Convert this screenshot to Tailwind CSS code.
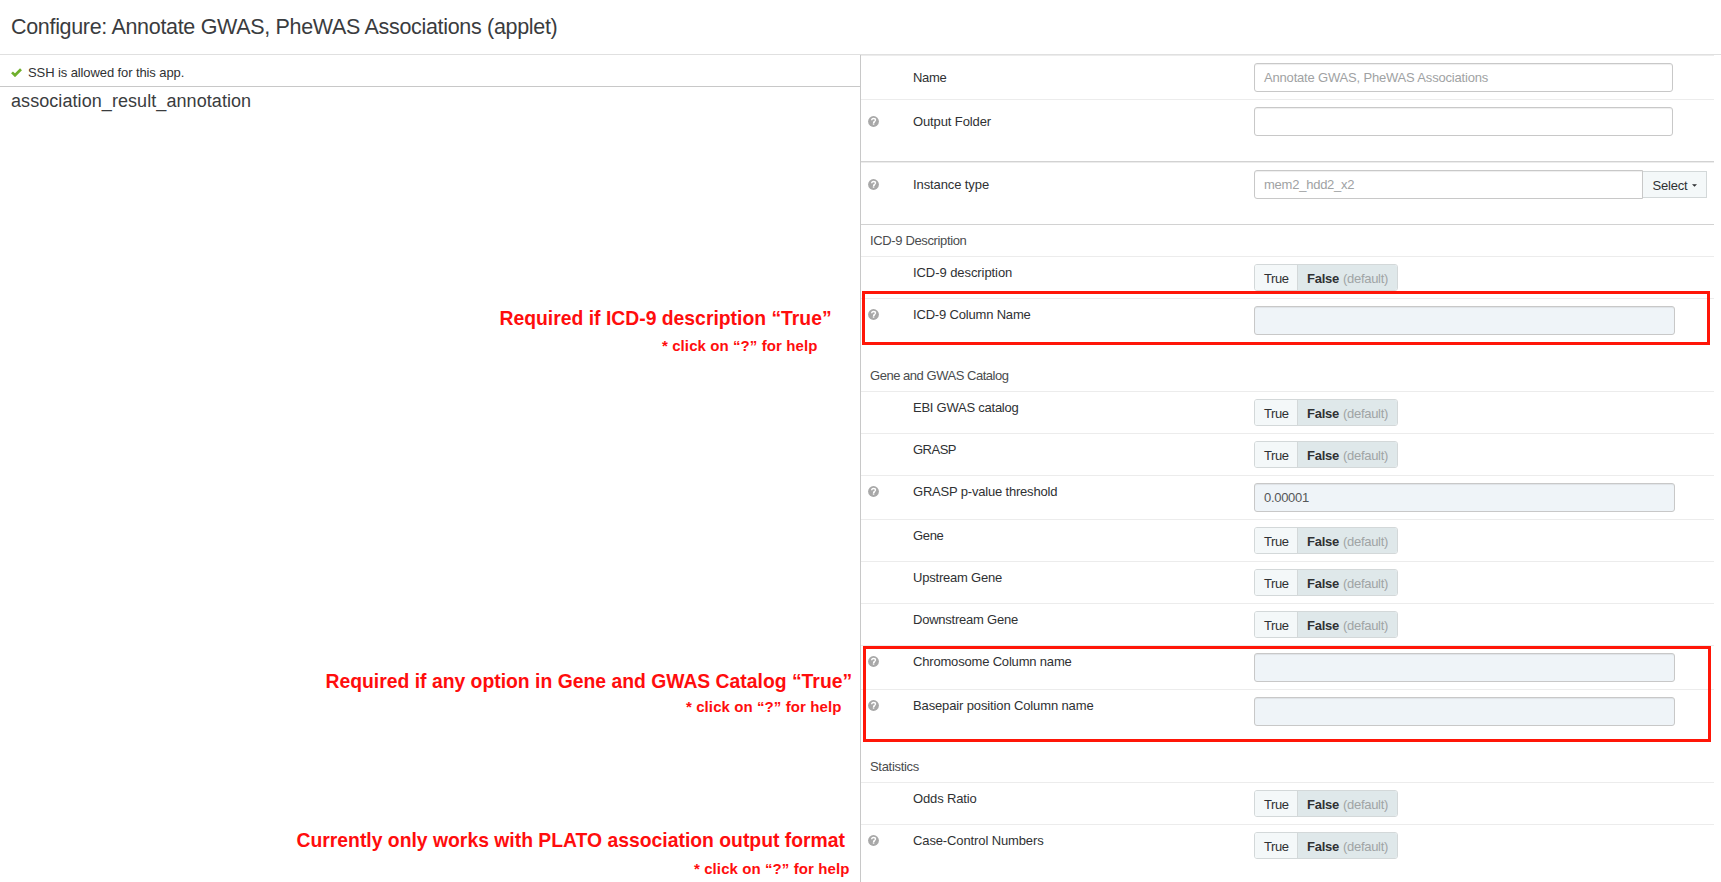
<!DOCTYPE html>
<html lang="en">
<head>
<meta charset="utf-8">
<title>Configure: Annotate GWAS, PheWAS Associations (applet)</title>
<script src="https://cdn.jsdelivr.net/npm/@tailwindcss/browser@4"></script>
</head>
<body class="relative h-[882px] w-[1721px] overflow-hidden bg-white font-['Liberation_Sans',Arial,sans-serif] text-[13px] leading-5 text-[#2f3133]">
<svg class="hidden">
  <symbol id="help" viewBox="0 0 11 11">
    <circle cx="5.5" cy="5.5" r="5.4" fill="#a8a8a8"/>
    <path d="M3.7 4.3C3.7 3.1 4.5 2.5 5.6 2.5S7.5 3.1 7.5 4.1C7.5 5.2 6.1 5.2 6.1 6.3H5" fill="none" stroke="#fff" stroke-width="1.4"/>
    <rect x="4.8" y="7.3" width="1.5" height="1.4" fill="#fff"/>
  </symbol>
</svg>

<header class="flex h-[55px] items-center border-b border-[#e0e0e0] pl-[11px]">
  <h1 class="text-[21.5px] leading-[52px] tracking-[-0.32px] text-[#3a3c3e] whitespace-nowrap">Configure: Annotate GWAS, PheWAS Associations (applet)</h1>
</header>

<main class="flex h-[827px]">
  <section class="w-[860px]">
    <div class="flex h-8 items-center gap-1.5 border-b border-[#c8c8c8] pl-[11px]">
      <svg class="mt-[3px] h-[9px] w-[11px]" viewBox="0 0 11 9"><path d="M1 4.4L4 7.3L10 1.2" fill="none" stroke="#6fb02c" stroke-width="2.7"/></svg>
      <span class="mt-[5px] tracking-[-0.1px]">SSH is allowed for this app.</span>
    </div>
    <h2 class="pl-[11px] pt-px text-[18px] leading-[26px] tracking-[0.07px] text-[#3a3c3e]">association_result_annotation</h2>
  </section>

  <section class="w-[854px] border-l border-[#c8c8c8]">
    <div class="flex h-11 border-t border-[#ececec]">
      <div class="w-[52px]"></div>
      <div class="w-[341px] pt-3 tracking-[-0.29px]">Name</div>
      <div class="mt-[7px] h-[29px] w-[419px] rounded-[3px] border border-[#c8c8c8] px-[9px] pt-1 tracking-[-0.18px] text-[#a0a2a3] shadow-[inset_0_1px_1px_rgba(0,0,0,0.07)]">Annotate GWAS, PheWAS Associations</div>
    </div>
    <div class="flex h-[62px] border-t border-[#ececec]">
      <div class="w-[52px] pl-[7px] pt-4"><svg class="h-[11px] w-[11px]"><use href="#help"/></svg></div>
      <div class="w-[341px] pt-3 tracking-[-0.11px]">Output Folder</div>
      <div class="mt-[7px] h-[29px] w-[419px] rounded-[3px] border border-[#c8c8c8] shadow-[inset_0_1px_1px_rgba(0,0,0,0.07)]"></div>
    </div>

    <div class="h-[63px] border-t border-[#d2d2d2]">
      <div class="flex border-t border-[#ececec]">
        <div class="w-[52px] pl-[7px] pt-4"><svg class="h-[11px] w-[11px]"><use href="#help"/></svg></div>
        <div class="w-[341px] pt-3 tracking-[-0.1px]">Instance type</div>
        <div class="mt-[7px] h-[29px] w-[389px] rounded-l-[3px] border border-[#c8c8c8] px-[9px] pt-1 tracking-[-0.24px] text-[#a0a2a3] shadow-[inset_0_1px_1px_rgba(0,0,0,0.07)]">mem2_hdd2_x2</div>
        <div class="mt-2 flex h-[27px] w-[64px] items-center gap-1 border border-l-0 border-[#d3d8d9] bg-[#f4f8f9] pl-[9.5px] pt-0.5 tracking-[-0.19px]">Select<svg class="h-[3px] w-[5px]" viewBox="0 0 6 3"><path d="M0 0H6L3 3Z" fill="#2f3133"/></svg></div>
      </div>
    </div>

    <div class="h-8 border-t border-[#d2d2d2] pl-[9px] pt-[5.5px] tracking-[-0.36px] text-[#4a4c4e]">ICD-9 Description</div>
    <div class="flex h-[42px] border-t border-[#ececec]">
      <div class="w-[52px]"></div>
      <div class="w-[341px] pt-1.5 tracking-[-0.07px]">ICD-9 description</div>
      <div class="mt-[7px] flex h-[27px] w-[144px] overflow-hidden rounded-[3px] border border-[#d3d8d9]"><div class="w-[43px] border-r border-[#d3d8d9] bg-[#f4f8f9] pl-[9px] pt-1 tracking-[-0.43px]">True</div><div class="flex-1 bg-[#dfe8ea] pl-[9px] pt-1 whitespace-nowrap"><b class="tracking-[-0.25px]">False</b><span class="ml-[4px] tracking-[-0.3px] text-[#a0a4a5]">(default)</span></div></div>
    </div>
    <div class="flex h-[61px] border-t border-[#ececec]">
      <div class="w-[52px] pl-[7px] pt-2.5"><svg class="h-[11px] w-[11px]"><use href="#help"/></svg></div>
      <div class="w-[341px] pt-1.5 tracking-[-0.18px]">ICD-9 Column Name</div>
      <div class="mt-[7px] h-[29px] w-[421px] rounded-[3px] border border-[#c8c8c8] bg-[#eff4f8] shadow-[inset_0_1px_1px_rgba(0,0,0,0.07)]"></div>
    </div>

    <div class="h-8 pl-[9px] pt-[6.5px] tracking-[-0.47px] text-[#4a4c4e]">Gene and GWAS Catalog</div>
    <div class="flex h-[42px] border-t border-[#ececec]">
      <div class="w-[52px]"></div>
      <div class="w-[341px] pt-1.5 tracking-[-0.24px]">EBI GWAS catalog</div>
      <div class="mt-[7px] flex h-[27px] w-[144px] overflow-hidden rounded-[3px] border border-[#d3d8d9]"><div class="w-[43px] border-r border-[#d3d8d9] bg-[#f4f8f9] pl-[9px] pt-1 tracking-[-0.43px]">True</div><div class="flex-1 bg-[#dfe8ea] pl-[9px] pt-1 whitespace-nowrap"><b class="tracking-[-0.25px]">False</b><span class="ml-[4px] tracking-[-0.3px] text-[#a0a4a5]">(default)</span></div></div>
    </div>
    <div class="flex h-[42px] border-t border-[#ececec]">
      <div class="w-[52px]"></div>
      <div class="w-[341px] pt-1.5 tracking-[-0.5px]">GRASP</div>
      <div class="mt-[7px] flex h-[27px] w-[144px] overflow-hidden rounded-[3px] border border-[#d3d8d9]"><div class="w-[43px] border-r border-[#d3d8d9] bg-[#f4f8f9] pl-[9px] pt-1 tracking-[-0.43px]">True</div><div class="flex-1 bg-[#dfe8ea] pl-[9px] pt-1 whitespace-nowrap"><b class="tracking-[-0.25px]">False</b><span class="ml-[4px] tracking-[-0.3px] text-[#a0a4a5]">(default)</span></div></div>
    </div>
    <div class="flex h-11 border-t border-[#ececec]">
      <div class="w-[52px] pl-[7px] pt-2.5"><svg class="h-[11px] w-[11px]"><use href="#help"/></svg></div>
      <div class="w-[341px] pt-1.5 tracking-[-0.19px]">GRASP p-value threshold</div>
      <div class="mt-[7px] h-[29px] w-[421px] rounded-[3px] border border-[#c8c8c8] bg-[#eff4f8] px-[9px] pt-1 tracking-[-0.3px] text-[#555759] shadow-[inset_0_1px_1px_rgba(0,0,0,0.07)]">0.00001</div>
    </div>
    <div class="flex h-[42px] border-t border-[#ececec]">
      <div class="w-[52px]"></div>
      <div class="w-[341px] pt-1.5 tracking-[-0.32px]">Gene</div>
      <div class="mt-[7px] flex h-[27px] w-[144px] overflow-hidden rounded-[3px] border border-[#d3d8d9]"><div class="w-[43px] border-r border-[#d3d8d9] bg-[#f4f8f9] pl-[9px] pt-1 tracking-[-0.43px]">True</div><div class="flex-1 bg-[#dfe8ea] pl-[9px] pt-1 whitespace-nowrap"><b class="tracking-[-0.25px]">False</b><span class="ml-[4px] tracking-[-0.3px] text-[#a0a4a5]">(default)</span></div></div>
    </div>
    <div class="flex h-[42px] border-t border-[#ececec]">
      <div class="w-[52px]"></div>
      <div class="w-[341px] pt-1.5 tracking-[-0.21px]">Upstream Gene</div>
      <div class="mt-[7px] flex h-[27px] w-[144px] overflow-hidden rounded-[3px] border border-[#d3d8d9]"><div class="w-[43px] border-r border-[#d3d8d9] bg-[#f4f8f9] pl-[9px] pt-1 tracking-[-0.43px]">True</div><div class="flex-1 bg-[#dfe8ea] pl-[9px] pt-1 whitespace-nowrap"><b class="tracking-[-0.25px]">False</b><span class="ml-[4px] tracking-[-0.3px] text-[#a0a4a5]">(default)</span></div></div>
    </div>
    <div class="flex h-[42px] border-t border-[#ececec]">
      <div class="w-[52px]"></div>
      <div class="w-[341px] pt-1.5 tracking-[-0.23px]">Downstream Gene</div>
      <div class="mt-[7px] flex h-[27px] w-[144px] overflow-hidden rounded-[3px] border border-[#d3d8d9]"><div class="w-[43px] border-r border-[#d3d8d9] bg-[#f4f8f9] pl-[9px] pt-1 tracking-[-0.43px]">True</div><div class="flex-1 bg-[#dfe8ea] pl-[9px] pt-1 whitespace-nowrap"><b class="tracking-[-0.25px]">False</b><span class="ml-[4px] tracking-[-0.3px] text-[#a0a4a5]">(default)</span></div></div>
    </div>
    <div class="flex h-11 border-t border-[#ececec]">
      <div class="w-[52px] pl-[7px] pt-2.5"><svg class="h-[11px] w-[11px]"><use href="#help"/></svg></div>
      <div class="w-[341px] pt-1.5 tracking-[-0.18px]">Chromosome Column name</div>
      <div class="mt-[7px] h-[29px] w-[421px] rounded-[3px] border border-[#c8c8c8] bg-[#eff4f8] shadow-[inset_0_1px_1px_rgba(0,0,0,0.07)]"></div>
    </div>
    <div class="flex h-[61px] border-t border-[#ececec]">
      <div class="w-[52px] pl-[7px] pt-2.5"><svg class="h-[11px] w-[11px]"><use href="#help"/></svg></div>
      <div class="w-[341px] pt-1.5 tracking-[-0.13px]">Basepair position Column name</div>
      <div class="mt-[7px] h-[29px] w-[421px] rounded-[3px] border border-[#c8c8c8] bg-[#eff4f8] shadow-[inset_0_1px_1px_rgba(0,0,0,0.07)]"></div>
    </div>

    <div class="h-8 pl-[9px] pt-[6.5px] tracking-[-0.3px] text-[#4a4c4e]">Statistics</div>
    <div class="flex h-[42px] border-t border-[#ececec]">
      <div class="w-[52px]"></div>
      <div class="w-[341px] pt-1.5 tracking-[-0.14px]">Odds Ratio</div>
      <div class="mt-[7px] flex h-[27px] w-[144px] overflow-hidden rounded-[3px] border border-[#d3d8d9]"><div class="w-[43px] border-r border-[#d3d8d9] bg-[#f4f8f9] pl-[9px] pt-1 tracking-[-0.43px]">True</div><div class="flex-1 bg-[#dfe8ea] pl-[9px] pt-1 whitespace-nowrap"><b class="tracking-[-0.25px]">False</b><span class="ml-[4px] tracking-[-0.3px] text-[#a0a4a5]">(default)</span></div></div>
    </div>
    <div class="flex h-[42px] border-t border-[#ececec]">
      <div class="w-[52px] pl-[7px] pt-2.5"><svg class="h-[11px] w-[11px]"><use href="#help"/></svg></div>
      <div class="w-[341px] pt-1.5 tracking-[-0.12px]">Case-Control Numbers</div>
      <div class="mt-[7px] flex h-[27px] w-[144px] overflow-hidden rounded-[3px] border border-[#d3d8d9]"><div class="w-[43px] border-r border-[#d3d8d9] bg-[#f4f8f9] pl-[9px] pt-1 tracking-[-0.43px]">True</div><div class="flex-1 bg-[#dfe8ea] pl-[9px] pt-1 whitespace-nowrap"><b class="tracking-[-0.25px]">False</b><span class="ml-[4px] tracking-[-0.3px] text-[#a0a4a5]">(default)</span></div></div>
    </div>
  </section>
</main>

<!-- Annotations laid over the form -->
<div class="absolute left-[862px] top-[291px] h-[54px] w-[848px] border-[3px] border-[#ff1608]"></div>
<div class="absolute left-[863px] top-[646px] h-[96px] w-[848px] border-[3px] border-[#ff1608]"></div>
<div class="font-bold whitespace-nowrap text-[#ff0d0d]">
  <p class="absolute left-[499.5px] top-[306px] text-[19.35px] leading-6">Required if ICD-9 description “True”</p>
  <p class="absolute left-[662px] top-[336px] text-[15px] tracking-[0.09px]">* click on “?” for help</p>
  <p class="absolute left-[325.5px] top-[669px] text-[19.35px] leading-6">Required if any option in Gene and GWAS Catalog “True”</p>
  <p class="absolute left-[686px] top-[697px] text-[15px] tracking-[0.09px]">* click on “?” for help</p>
  <p class="absolute left-[296.5px] top-[828px] text-[19.35px] leading-6">Currently only works with PLATO association output format</p>
  <p class="absolute left-[694px] top-[859px] text-[15px] tracking-[0.09px]">* click on “?” for help</p>
</div>
</body>
</html>
